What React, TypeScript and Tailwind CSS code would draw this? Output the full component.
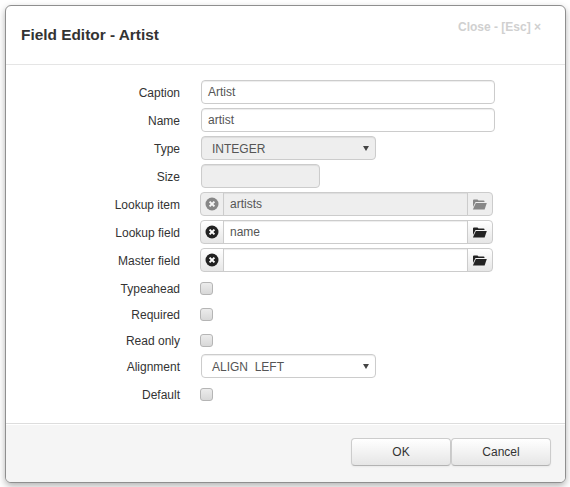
import React from "react";

function Clear({ muted }: { muted?: boolean }) {
  return (
    <svg width="14" height="14" viewBox="0 0 14 14" className={muted ? "opacity-50" : ""}>
      <circle cx="7" cy="7" r="6.5" fill="#222" />
      <path d="M4.6 4.6 L9.4 9.4 M9.4 4.6 L4.6 9.4" stroke="#fff" strokeWidth="2" />
    </svg>
  );
}

function Folder({ muted }: { muted?: boolean }) {
  return (
    <svg width="15" height="12" viewBox="0 0 15 12" className={`-translate-x-[1px] ${muted ? "opacity-50" : ""}`}>
      <path d="M1 2.5 Q1 1.5 2 1.5 H5.5 L6.5 2.5 H11.5 Q12.5 2.5 12.5 3.5 V4 H3.5 L1 9 Z" fill="#222" />
      <path d="M3.8 5 H14.8 L12.6 11.5 H0.9 Z" fill="#222" />
    </svg>
  );
}

function Label({ children }: { children: React.ReactNode }) {
  return <div className="w-[175px] shrink-0 text-right text-[12px] text-[#333] pt-[1px]">{children}</div>;
}

function Row({ label, h, children }: { label: string; h: string; children: React.ReactNode }) {
  return (
    <div className={`flex items-center gap-[21px] ${h}`}>
      <Label>{label}</Label>
      {children}
    </div>
  );
}

const inputCls = "h-[24px] border border-[#ccc] rounded-[4px] px-[6px] pt-[1px] text-[12px] leading-[20px] text-[#555] shadow-[inset_0_1px_1px_rgba(0,0,0,0.075)]";

function Select({ value, disabled }: { value: string; disabled?: boolean }) {
  return (
    <div className={`${inputCls} w-[175px] flex items-center justify-between pl-[10px] pr-[6px] ${disabled ? "bg-[#eeeeee]" : "bg-white"}`}>
      <span className="whitespace-pre">{value}</span>
      <svg width="6" height="5" viewBox="0 0 6 5" className="-mt-[1px]">
        <path d="M0 0 H6 L3 5 Z" fill="#444" />
      </svg>
    </div>
  );
}

function Lookup({ value, disabled }: { value: string; disabled?: boolean }) {
  const btn = "h-[24px] flex items-center justify-center border border-[#ccc] bg-gradient-to-b from-[#ffffff] to-[#e6e6e6]";
  const off = "bg-none bg-[#eeeeee]";
  return (
    <div className="flex -ml-[1px]">
      <div className={`${btn} ${disabled ? off : ""} w-[24px] rounded-l-[4px]`}>
        <Clear muted={disabled} />
      </div>
      <div className={`h-[24px] w-[245px] -ml-[1px] border border-[#ccc] pl-[6px] pt-[1px] text-[12px] leading-[20px] text-[#555] shadow-[inset_0_1px_1px_rgba(0,0,0,0.075)] ${disabled ? "bg-[#eeeeee]" : "bg-white"}`}>
        {value}
      </div>
      <div className={`${btn} ${disabled ? off : ""} w-[26px] -ml-[1px] rounded-r-[4px]`}>
        <Folder muted={disabled} />
      </div>
    </div>
  );
}

function Check() {
  return <div className="w-[13px] h-[13px] -ml-[1px] mt-[1px] border border-[#b5b5b5] rounded-[3px] bg-gradient-to-b from-[#ececec] to-[#d8d8d8]" />;
}

const footerBtn = "h-[28px] flex items-center justify-center rounded-[4px] border border-[#ccc] border-b-[#b3b3b3] bg-gradient-to-b from-[#ffffff] to-[#e6e6e6] text-[12px] text-[#333] shadow-[inset_0_1px_0_rgba(255,255,255,0.2),0_1px_2px_rgba(0,0,0,0.05)]";

export default function App() {
  return (
    <div className="w-[570px] h-[487px] bg-white pt-[5px] pl-[5px] font-['Liberation_Sans',Arial,sans-serif]">
      <div className="w-[561px] h-[478px] bg-white border border-[#8f8f8f] rounded-[6px] shadow-[0_3px_7px_rgba(0,0,0,0.3)] flex flex-col overflow-hidden">
        <div className="h-[59px] shrink-0 border-b border-[#e5e5e5] flex justify-between pl-[15px] pr-[24px]">
          <h3 className="text-[15.4px] font-bold text-[#333] mt-[20px] leading-[18px]">Field Editor - Artist</h3>
          <div className="text-[12px] font-bold text-[#d0d0d0] mt-[14px] leading-[14px] -mr-[1px] -translate-x-[1px]">Close - [Esc] ×</div>
        </div>
        <div className="flex-1 pt-[15px] pl-0">
          <div className="flex flex-col gap-[4px] -ml-[1px] mr-[1px]">
            <Row label="Caption" h="h-[24px]"><div className={`${inputCls} w-[294px] bg-white`}>Artist</div></Row>
            <Row label="Name" h="h-[24px]"><div className={`${inputCls} w-[294px] bg-white`}>artist</div></Row>
            <Row label="Type" h="h-[24px]"><Select value="INTEGER" disabled /></Row>
            <Row label="Size" h="h-[24px]"><div className={`${inputCls} w-[119px] bg-[#eeeeee]`} /></Row>
            <Row label="Lookup item" h="h-[24px]"><Lookup value="artists" disabled /></Row>
            <Row label="Lookup field" h="h-[24px]"><Lookup value="name" /></Row>
            <Row label="Master field" h="h-[24px]"><Lookup value="" /></Row>
          </div>
          <div className="flex flex-col -ml-[1px] mt-[3px]">
            <Row label="Typeahead" h="h-[26px]"><Check /></Row>
            <Row label="Required" h="h-[26px]"><Check /></Row>
            <Row label="Read only" h="h-[26px]"><Check /></Row>
            <Row label="Alignment" h="h-[26px]"><Select value="ALIGN  LEFT" /></Row>
            <Row label="Default" h="h-[30px]"><Check /></Row>
          </div>
        </div>
        <div className="h-[59px] shrink-0 bg-[#f5f5f5] border-t border-[#ddd] flex justify-end items-start pt-[14px] pr-[14px] shadow-[inset_0_1px_0_#ffffff]">
          <div className={`${footerBtn} w-[100px]`}>OK</div>
          <div className={`${footerBtn} w-[100px]`}>Cancel</div>
        </div>
      </div>
    </div>
  );
}
